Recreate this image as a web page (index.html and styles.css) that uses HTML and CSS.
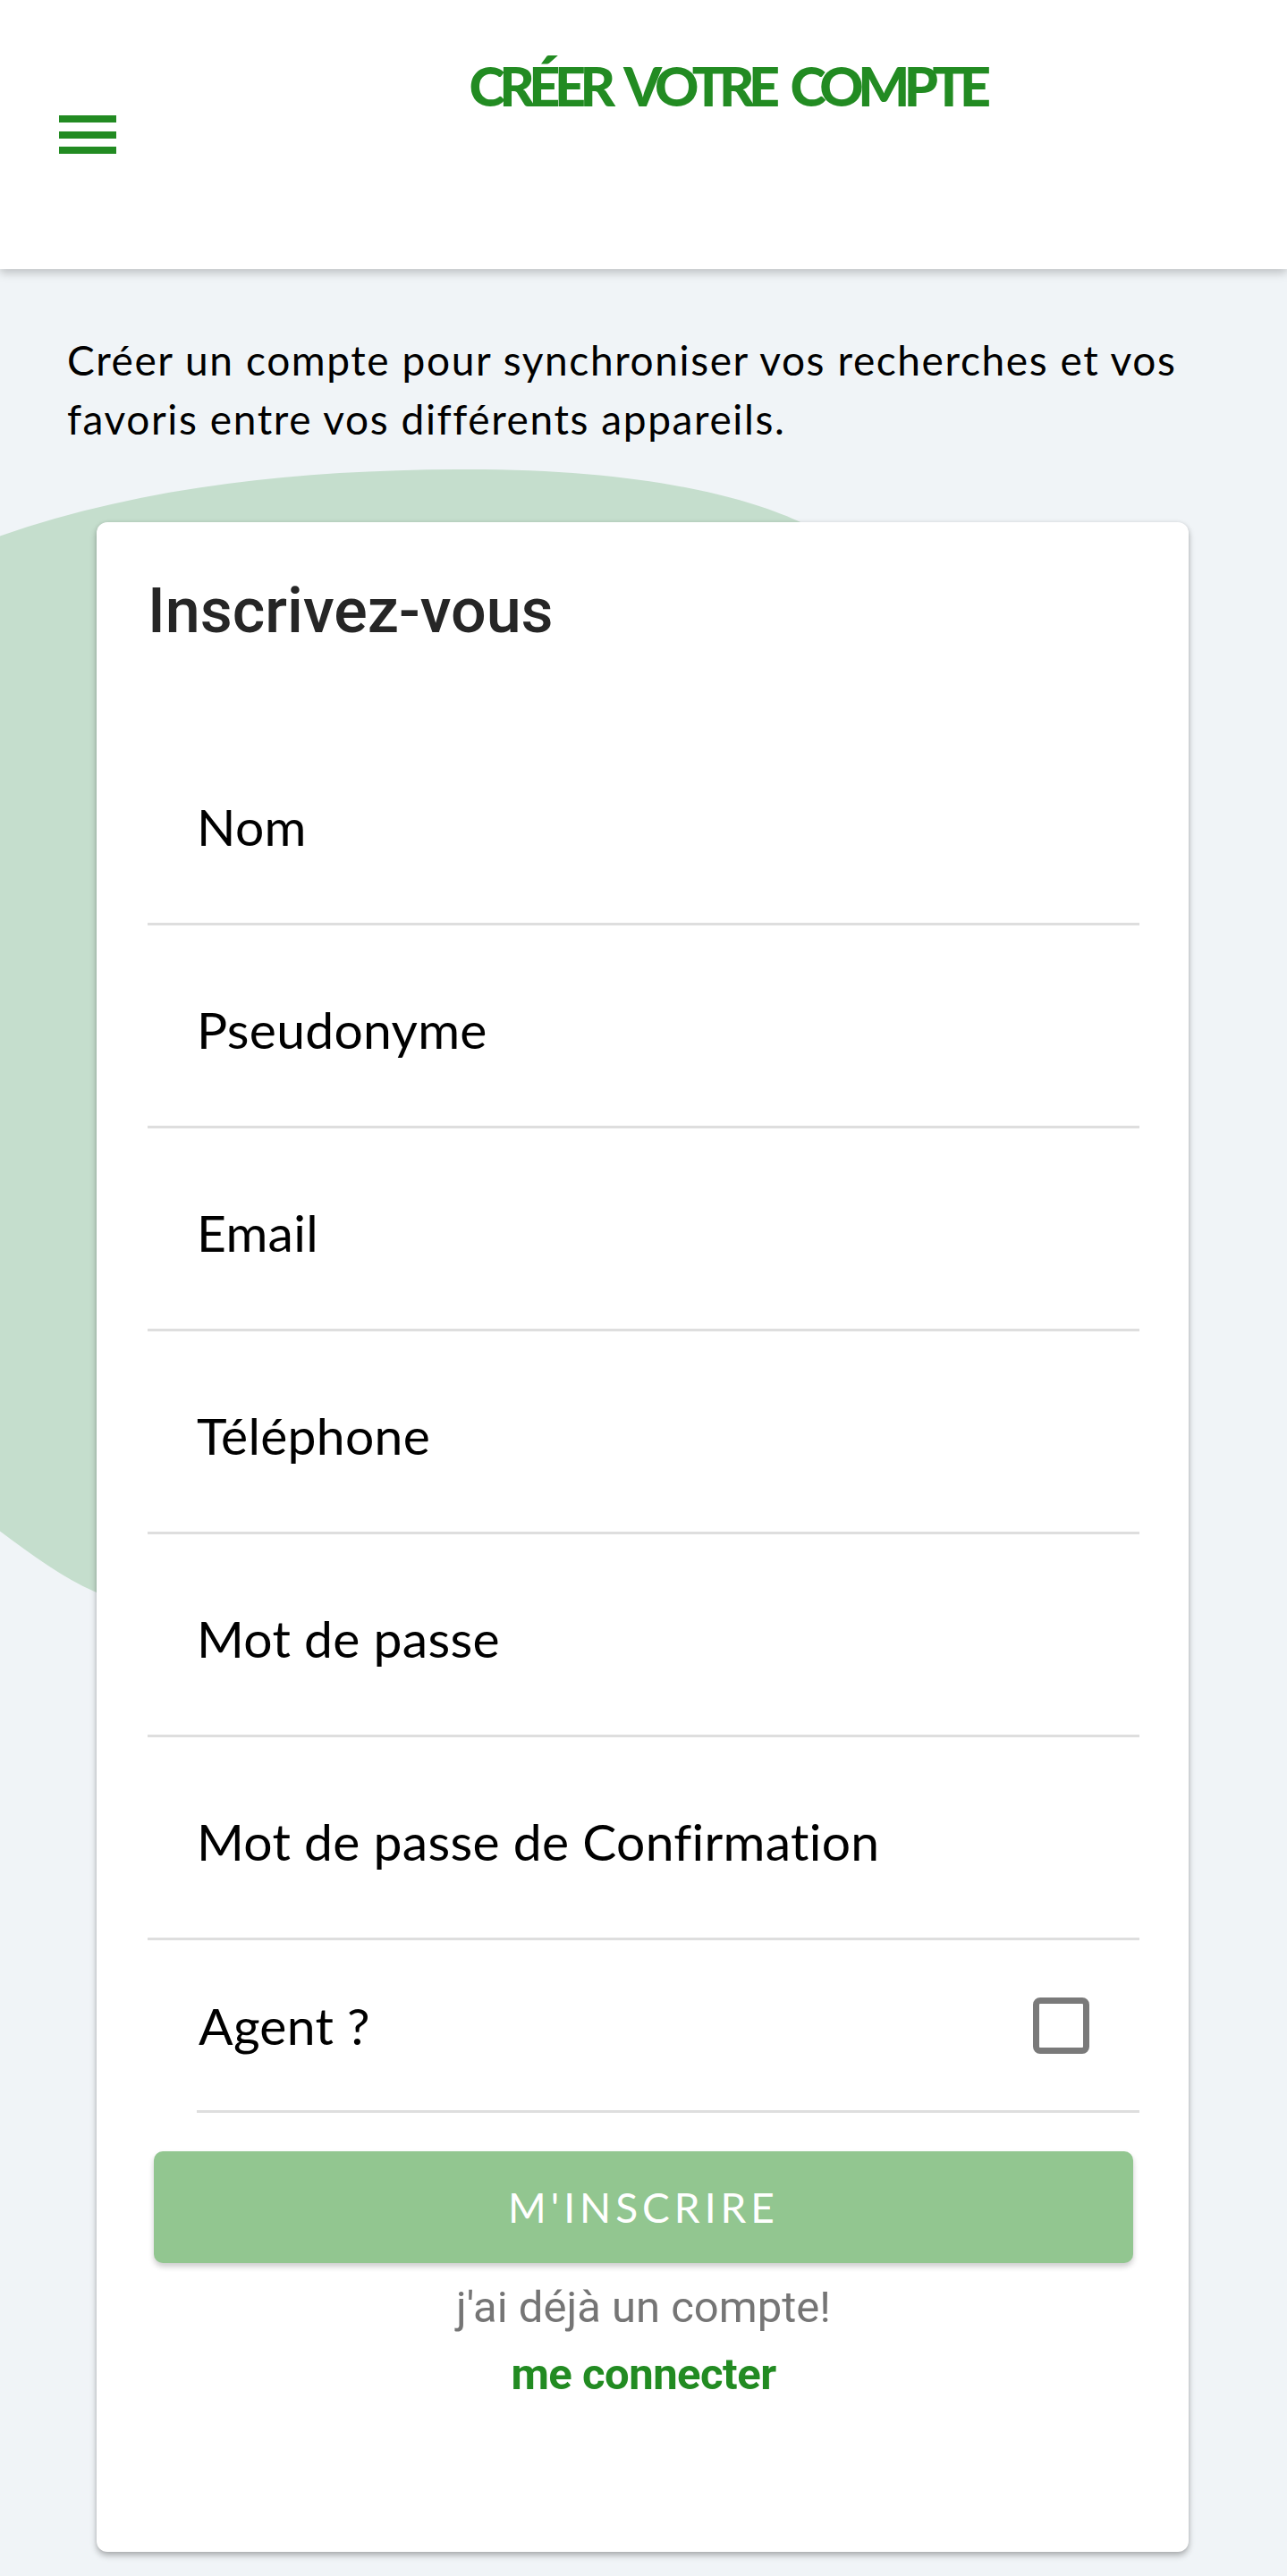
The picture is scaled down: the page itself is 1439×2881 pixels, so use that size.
FILE: index.html
```html
<!DOCTYPE html>
<html lang="fr">
<head>
<meta charset="utf-8">
<title>Créer votre compte</title>
<link rel="stylesheet" href="styles.css">
</head>
<body>
<header class="topbar">
  <button class="menu-btn" aria-label="menu"><span></span><span></span><span></span></button>
  <h1 class="page-title">CRÉER VOTRE COMPTE</h1>
</header>
<main class="content">
  <svg class="blob" viewBox="0 0 1439 1600" width="1439" height="1600" aria-hidden="true">
    <path d="M-10,302 C150,244 330,224 523,224 C700,224 820,249 893,282 C1150,399 1300,699 1200,999 C1100,1349 500,1649 108,1480 C70,1464 30,1434 -10,1404 Z" fill="#c5decd"/>
  </svg>
  <p class="intro">Créer un compte pour synchroniser vos recherches et vos favoris entre vos différents appareils.</p>
  <section class="card">
    <h2 class="card-title">Inscrivez-vous</h2>
    <div class="field"><span class="label">Nom</span></div>
    <div class="field"><span class="label">Pseudonyme</span></div>
    <div class="field"><span class="label">Email</span></div>
    <div class="field"><span class="label">Téléphone</span></div>
    <div class="field"><span class="label">Mot de passe</span></div>
    <div class="field"><span class="label">Mot de passe de Confirmation</span></div>
    <div class="agent-row">
      <div class="agent-inner"><span class="label">Agent ?</span><span class="checkbox"></span></div>
    </div>
    <button class="submit">M'INSCRIRE</button>
    <p class="have-account">j'ai déjà un compte!</p>
    <a class="login-link" href="#">me connecter</a>
  </section>
</main>
</body>
</html>
```
FILE: styles.css
```css
html, body {
  margin: 0;
  padding: 0;
}
body {
  background: #f0f4f7;
  font-family: Lato, "Open Sans", sans-serif;
  min-height: 100vh;
}
.topbar {
  position: relative;
  z-index: 2;
  height: 301px;
  background: #fff;
  display: grid;
  grid-template-columns: 187px 1fr;
  box-shadow: 0 4px 10px rgba(0, 0, 0, 0.22);
}
.menu-btn {
  align-self: center;
  justify-self: start;
  margin-left: 66px;
  width: 64px;
  height: 43px;
  padding: 0;
  border: 0;
  background: none;
  display: flex;
  flex-direction: column;
  justify-content: space-between;
}
.menu-btn span {
  display: block;
  height: 8px;
  width: 100%;
  background: #228b22;
}
.page-title {
  margin: 0;
  padding-top: 59px;
  align-self: start;
  text-align: center;
  font-family: Lato, sans-serif;
  font-weight: 900;
  font-size: 61px;
  line-height: 1.2;
  letter-spacing: -6.5px;
  word-spacing: 10px;
  color: #228b22;
}
.content {
  position: relative;
  padding: 69px 0 25px;
}
.blob {
  position: absolute;
  top: 0;
  left: 0;
  z-index: 0;
  overflow: visible;
}
.intro {
  position: relative;
  z-index: 1;
  margin: 0 60px 0 75px;
  font-size: 46px;
  line-height: 66px;
  letter-spacing: 1.6px;
  color: #000;
}
.card {
  position: relative;
  z-index: 1;
  margin: 82px 0 0 108px;
  width: 1221px;
  box-sizing: border-box;
  background: #fff;
  border-radius: 12px;
  padding: 58px 55px 170px 57px;
  box-shadow: 0 4px 7px rgba(0, 0, 0, 0.28), 0 0 4px rgba(0, 0, 0, 0.08);
}
.card-title {
  margin: 0 0 84px;
  font-family: Roboto, sans-serif;
  font-weight: 500;
  font-size: 70px;
  line-height: 82px;
  color: #262626;
}
.field {
  height: 227px;
  box-sizing: border-box;
  border-bottom: 3px solid #dedede;
  display: flex;
  align-items: center;
  padding: 8px 0 0 55px;
}
.label {
  font-size: 57px;
  line-height: 68px;
  letter-spacing: 0.3px;
  color: #000;
}
.agent-row {
  margin-left: 55px;
}
.agent-inner {
  height: 193px;
  box-sizing: border-box;
  border-bottom: 3px solid #dedede;
  display: flex;
  align-items: center;
  padding-left: 2px;
  padding-right: 56px;
}
.checkbox {
  margin-left: auto;
  width: 63px;
  height: 63px;
  box-sizing: border-box;
  border: 7px solid #7a7a7a;
  border-radius: 8px;
}
.submit {
  display: block;
  width: calc(100% - 14px);
  margin: 43px 7px 0;
  height: 125px;
  border: 0;
  border-radius: 10px;
  background: #92c690;
  color: #fff;
  font-family: Lato, sans-serif;
  font-size: 46px;
  letter-spacing: 5px;
  box-shadow: 0 4px 6px rgba(0, 0, 0, 0.2);
}
.have-account {
  margin: 21px 0 0;
  text-align: center;
  font-family: Roboto, sans-serif;
  font-size: 49px;
  line-height: 57px;
  color: #757575;
}
.login-link {
  display: block;
  margin-top: 18px;
  text-align: center;
  font-family: Roboto, sans-serif;
  font-weight: 700;
  font-size: 49px;
  line-height: 57px;
  letter-spacing: -0.5px;
  color: #228b22;
  text-decoration: none;
}
```
